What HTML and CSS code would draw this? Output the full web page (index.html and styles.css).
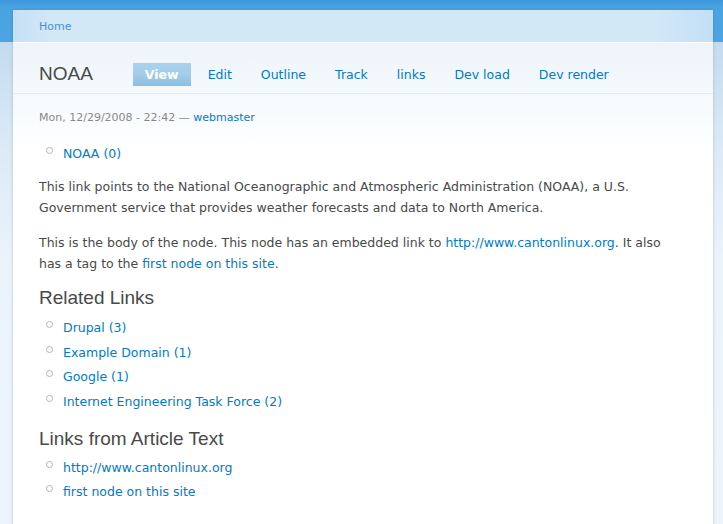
FILE: index.html
```html
<!DOCTYPE html>
<html>
<head>
<meta charset="utf-8">
<link rel="stylesheet" href="styles.css">
</head>
<body>
<div class="page">
  <div class="breadcrumb"><a href="#">Home</a></div>
  <div class="main">
    <div class="titlebar">
      <h1 class="title">NOAA</h1>
      <ul class="tabs">
        <li class="active"><a href="#">View</a></li>
        <li><a href="#">Edit</a></li>
        <li><a href="#">Outline</a></li>
        <li><a href="#">Track</a></li>
        <li><a href="#">links</a></li>
        <li><a href="#">Dev load</a></li>
        <li><a href="#">Dev render</a></li>
      </ul>
    </div>
    <div class="content">
      <div class="meta">Mon, 12/29/2008 - 22:42 — <a href="#">webmaster</a></div>
      <ul class="bullets first">
        <li><a href="#">NOAA (0)</a></li>
      </ul>
      <p>This link points to the National Oceanographic and Atmospheric Administration (NOAA), a U.S. Government service that provides weather forecasts and data to North America.</p>
      <p>This is the body of the node. This node has an embedded link to <a href="#">http://www.cantonlinux.org</a>. It also has a tag to the <a href="#">first node on this site</a>.</p>
      <h2>Related Links</h2>
      <ul class="bullets">
        <li><a href="#">Drupal (3)</a></li>
        <li><a href="#">Example Domain (1)</a></li>
        <li><a href="#">Google (1)</a></li>
        <li><a href="#">Internet Engineering Task Force (2)</a></li>
      </ul>
      <h2 class="second">Links from Article Text</h2>
      <ul class="bullets">
        <li><a href="#">http://www.cantonlinux.org</a></li>
        <li><a href="#">first node on this site</a></li>
      </ul>
    </div>
  </div>
</div>
</body>
</html>
```

FILE: styles.css
```css
html, body {
  margin: 0;
  padding: 0;
  height: 100%;
}
body {
  font-family: "DejaVu Sans", Verdana, sans-serif;
  font-size: 12.5px;
  color: #494949;
  background:
    linear-gradient(to bottom, #3d97dc 0, #4aa3e1 8px, #4ca5e2 42px, transparent 42px),
    linear-gradient(to bottom, #c2dbee 42px, #dbe9f6 140px, #ebf3fb 260px, #edf4fc 100%);
  overflow: hidden;
}
a {
  color: #027ac6;
  text-decoration: none;
}
.page {
  width: 700px;
  margin: 10px 0 0 13px;
  min-height: 520px;
  box-shadow: 0 0 3px rgba(30, 80, 130, 0.25);
  background: #fff;
}
.breadcrumb {
  height: 32px;
  line-height: 33px;
  padding-left: 26px;
  font-size: 11px;
  background: linear-gradient(to right, #c6e0f5 0, #d3e8f7 40px, #d3e8f7 640px, #c2dff5 700px);
  border-bottom: 1px solid #fff;
}
.breadcrumb a {
  color: #4a90cf;
}
.main {
  background: linear-gradient(to bottom, #edf4fa 0, #f8fbfd 70px, #fff 110px);
}
.titlebar {
  display: flex;
  align-items: flex-end;
  box-sizing: border-box;
  height: 51px;
  padding: 0 0 7px 26px;
  border-bottom: 1px solid #e3ebf2;
}
.title {
  margin: 0 40px 0 0;
  font-family: "Liberation Sans", Arial, sans-serif;
  font-weight: normal;
  font-size: 19px;
  color: #494949;
  line-height: 24px;
}
.tabs {
  display: flex;
  list-style: none;
  margin: 0;
  padding: 0;
  gap: 5px;
}
.tabs li a {
  display: block;
  padding: 0 12px;
  height: 23px;
  line-height: 24px;
  font-size: 12.5px;
}
.tabs li.active a {
  color: #fff;
  font-weight: bold;
  background: linear-gradient(to bottom, #a9d2ec 0, #a3cdea 50%, #8bbee1 100%);
}
.content {
  padding: 0 32px 20px 26px;
}
.meta {
  margin-top: 15px;
  line-height: 18px;
  font-size: 11px;
  color: #898989;
}
.bullets {
  list-style: none;
  margin: 7px 0 0 0;
  padding: 0 0 0 24px;
}
.bullets.first {
  margin-top: 16px;
}
.bullets li {
  line-height: 21px;
  margin-bottom: 3.5px;
  position: relative;
}
.bullets li::before {
  content: "";
  position: absolute;
  left: -17px;
  top: 4px;
  width: 5px;
  height: 5px;
  border: 1px solid #b5b5b5;
  border-radius: 50%;
}
p {
  margin: 11.5px 0 12.5px 0;
  line-height: 21px;
}
p + p {
  margin-top: 14px;
}
h2 {
  font-family: "Liberation Sans", Arial, sans-serif;
  font-weight: normal;
  font-size: 19px;
  line-height: 24px;
  color: #494949;
  margin: 9.5px 0 0 0;
}
h2.second {
  margin-top: 15px;
}
.second + .bullets {
  margin-top: 6px;
}
```
